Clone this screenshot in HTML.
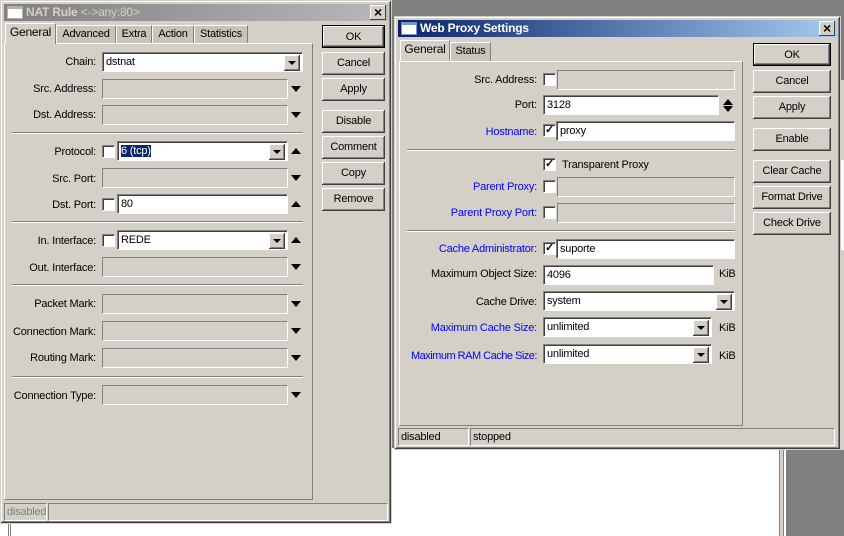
<!DOCTYPE html>
<html><head><meta charset="utf-8">
<style>
*{box-sizing:border-box;margin:0;padding:0}
body{width:844px;height:536px;overflow:hidden;position:relative;background:#808080;font-family:"Liberation Sans",sans-serif;font-size:11px;color:#000;letter-spacing:-0.2px}
.a{position:absolute}
.win{position:absolute;background:#d4d0c8;border:1px solid #d4d0c8;box-shadow:inset -1px -1px #404040,inset 1px 1px #fff,inset -2px -2px #808080}
.title{position:absolute;left:3px;right:3px;top:3px;height:17px;color:#fff;font-weight:bold;font-size:12px;line-height:17px;padding-left:22px;white-space:nowrap}
.ticon{position:absolute;left:3px;top:2px;width:16px;height:13px;background:#fff;border:1px solid #7a96c8;border-top:3px solid #7a96c8}
.close{position:absolute;right:2px;top:1px;width:16px;height:15px;background:#d4d0c8;box-shadow:inset -1px -1px #404040,inset 1px 1px #fff;color:#000;font-size:14px;line-height:14px;text-align:center;font-weight:bold;padding:0}
.tab{position:absolute;height:19px;background:#d4d0c8;border:1px solid #fff;border-right:1px solid #808080;border-bottom:none;line-height:17px;text-align:center;color:#000;font-size:11px}
.tab.sel{height:21px;background:#d4d0c8;font-size:12px;z-index:2}
.tab.un{background:#c8c4bc}
.panel{position:absolute;border:1px solid #fff;border-right-color:#808080;border-bottom-color:#808080}
.btn{position:absolute;height:23px;background:#d4d0c8;box-shadow:inset -1px -1px #404040,inset 1px 1px #fff,inset -2px -2px #808080;text-align:center;line-height:22px;font-size:11px}
.btn.def{border:1px solid #000}
.lbl{position:absolute;text-align:right;white-space:nowrap;font-size:11px}
.blue{color:#0000ff}
.fd{position:absolute;height:20px;background:#d4d0c8;border:1px solid;border-color:#808080 #fff #fff #808080}
.fw{position:absolute;height:20px;background:#fff;border:1px solid;border-color:#808080 #fff #fff #808080;box-shadow:inset 1px 1px #404040;padding:3px 0 0 3px;font-size:11px;line-height:13px;white-space:nowrap}
.cb{position:absolute;width:13px;height:13px;background:#fff;border:1px solid;border-color:#808080 #fff #fff #808080;box-shadow:inset 1px 1px #404040;font-size:11px;line-height:10px;text-align:center;font-weight:bold}
.dd{position:absolute;width:16px;height:16px;top:2px;right:2px;background:#d4d0c8;box-shadow:inset -1px -1px #404040,inset 1px 1px #fff,inset -2px -2px #808080}
.dd:after{content:"";position:absolute;left:4px;top:6px;border-left:4px solid transparent;border-right:4px solid transparent;border-top:4px solid #000}
.dn{position:absolute;width:0;height:0;border-left:5px solid transparent;border-right:5px solid transparent;border-top:6px solid #000}
.up{position:absolute;width:0;height:0;border-left:5px solid transparent;border-right:5px solid transparent;border-bottom:6px solid #000}
.sep{position:absolute;height:2px;border-top:1px solid #808080;border-bottom:1px solid #fff}
.st{position:absolute;height:18px;border:1px solid;border-color:#808080 #fff #fff #808080;padding-left:2px;line-height:16px;font-size:11px}
</style></head><body>
<div class="a" style="left:0;top:520px;width:786px;height:16px;background:#fff"></div>
<div class="a" style="left:8px;top:520px;width:3px;height:16px;border-left:1px solid #808080;border-right:1px solid #808080"></div>
<div class="a" style="left:390px;top:448px;width:396px;height:88px;background:#fff"></div>
<div class="a" style="left:779px;top:448px;width:5px;height:88px;border-left:1px solid #808080;border-right:1px solid #808080;background:#d4d0c8"></div>
<div class="a" style="left:838px;top:80px;width:6px;height:370px;background:#d4d0c8"></div>
<div class="a" style="left:838px;top:160px;width:6px;height:90px;background:#fff"></div>

<div class="win" style="left:0;top:0;width:392px;height:524px">
 <div class="title" style="background:linear-gradient(90deg,#808080,#b8b8b8);color:#d4d0c8"><div class="ticon" style="border-color:#b0b0b0"></div>NAT Rule <span style="font-weight:normal">&lt;-&gt;any:80&gt;</span><div class="close">×</div></div>
</div>
<div class="tab sel" style="left:5px;top:23px;width:51px">General</div>
<div class="tab un" style="left:56px;top:25px;width:60px">Advanced</div>
<div class="tab un" style="left:116px;top:25px;width:36px">Extra</div>
<div class="tab un" style="left:152px;top:25px;width:42px">Action</div>
<div class="tab un" style="left:194px;top:25px;width:54px">Statistics</div>
<div class="panel" style="left:4px;top:43px;width:309px;height:457px"></div>

<div class="lbl" style="left:0;width:96px;top:56px">Chain:</div>
<div class="fw" style="left:102px;top:52px;width:201px">dstnat<div class="dd"></div></div>
<div class="lbl" style="left:0;width:96px;top:83px">Src. Address:</div>
<div class="fd" style="left:102px;top:79px;width:186px"></div><div class="dn" style="left:291px;top:86px"></div>
<div class="lbl" style="left:0;width:96px;top:109px">Dst. Address:</div>
<div class="fd" style="left:102px;top:105px;width:186px"></div><div class="dn" style="left:291px;top:112px"></div>
<div class="sep" style="left:12px;top:132px;width:291px"></div>

<div class="lbl" style="left:0;width:96px;top:146px">Protocol:</div>
<div class="cb" style="left:102px;top:145px"></div>
<div class="fw" style="left:117px;top:141px;width:171px"><span style="background:#0a246a;color:#fff">6 (tcp)</span><div class="dd"></div></div><div class="up" style="left:291px;top:148px"></div>
<div class="lbl" style="left:0;width:96px;top:173px">Src. Port:</div>
<div class="fd" style="left:102px;top:168px;width:186px"></div><div class="dn" style="left:291px;top:175px"></div>
<div class="lbl" style="left:0;width:96px;top:199px">Dst. Port:</div>
<div class="cb" style="left:102px;top:198px"></div>
<div class="fw" style="left:117px;top:194px;width:171px">80</div><div class="up" style="left:291px;top:201px"></div>
<div class="sep" style="left:12px;top:221px;width:291px"></div>

<div class="lbl" style="left:0;width:96px;top:235px">In. Interface:</div>
<div class="cb" style="left:102px;top:234px"></div>
<div class="fw" style="left:117px;top:230px;width:171px">REDE<div class="dd"></div></div><div class="up" style="left:291px;top:237px"></div>
<div class="lbl" style="left:0;width:96px;top:262px">Out. Interface:</div>
<div class="fd" style="left:102px;top:257px;width:186px"></div><div class="dn" style="left:291px;top:264px"></div>
<div class="sep" style="left:12px;top:284px;width:291px"></div>

<div class="lbl" style="left:0;width:96px;top:298px">Packet Mark:</div>
<div class="fd" style="left:102px;top:294px;width:186px"></div><div class="dn" style="left:291px;top:301px"></div>
<div class="lbl" style="left:0;width:96px;top:326px">Connection Mark:</div>
<div class="fd" style="left:102px;top:321px;width:186px"></div><div class="dn" style="left:291px;top:328px"></div>
<div class="lbl" style="left:0;width:96px;top:352px">Routing Mark:</div>
<div class="fd" style="left:102px;top:348px;width:186px"></div><div class="dn" style="left:291px;top:355px"></div>
<div class="sep" style="left:12px;top:376px;width:291px"></div>
<div class="lbl" style="left:0;width:96px;top:390px">Connection Type:</div>
<div class="fd" style="left:102px;top:385px;width:186px"></div><div class="dn" style="left:291px;top:392px"></div>

<div class="btn def" style="left:322px;top:25px;width:63px">OK</div>
<div class="btn" style="left:322px;top:52px;width:63px">Cancel</div>
<div class="btn" style="left:322px;top:78px;width:63px">Apply</div>
<div class="btn" style="left:322px;top:110px;width:63px">Disable</div>
<div class="btn" style="left:322px;top:136px;width:63px">Comment</div>
<div class="btn" style="left:322px;top:162px;width:63px">Copy</div>
<div class="btn" style="left:322px;top:188px;width:63px">Remove</div>

<div class="st" style="left:4px;top:503px;width:43px;color:#808080">disabled</div>
<div class="st" style="left:48px;top:503px;width:340px"></div>

<div class="win" style="left:394px;top:16px;width:447px;height:434px">
 <div class="title" style="background:linear-gradient(90deg,#0a246a,#a6caf0)"><div class="ticon"></div>Web Proxy Settings<div class="close">×</div></div>
</div>
<div class="tab sel" style="left:400px;top:40px;width:50px">General</div>
<div class="tab un" style="left:450px;top:42px;width:41px">Status</div>
<div class="panel" style="left:399px;top:61px;width:344px;height:365px"></div>

<div class="lbl" style="left:400px;width:137px;top:74px">Src. Address:</div>
<div class="cb" style="left:543px;top:73px"></div>
<div class="fd" style="left:557px;top:70px;width:178px"></div>
<div class="lbl" style="left:400px;width:137px;top:99px">Port:</div>
<div class="fw" style="left:543px;top:95px;width:176px">3128</div>
<div class="up" style="left:723px;top:99px"></div><div class="dn" style="left:723px;top:106px"></div>
<div class="lbl blue" style="left:400px;width:137px;top:126px">Hostname:</div>
<div class="cb" style="left:543px;top:124px">✓</div>
<div class="fw" style="left:556px;top:121px;width:179px">proxy</div>
<div class="sep" style="left:407px;top:149px;width:328px"></div>

<div class="cb" style="left:543px;top:158px">✓</div>
<div class="lbl" style="left:562px;top:159px">Transparent Proxy</div>
<div class="lbl blue" style="left:400px;width:137px;top:181px">Parent Proxy:</div>
<div class="cb" style="left:543px;top:180px"></div>
<div class="fd" style="left:557px;top:177px;width:178px"></div>
<div class="lbl blue" style="left:400px;width:137px;top:207px">Parent Proxy Port:</div>
<div class="cb" style="left:543px;top:206px"></div>
<div class="fd" style="left:557px;top:203px;width:178px"></div>
<div class="sep" style="left:407px;top:230px;width:328px"></div>

<div class="lbl blue" style="left:400px;width:137px;top:243px">Cache Administrator:</div>
<div class="cb" style="left:543px;top:242px">✓</div>
<div class="fw" style="left:556px;top:239px;width:179px">suporte</div>
<div class="lbl" style="left:400px;width:137px;top:268px">Maximum Object Size:</div>
<div class="fw" style="left:543px;top:265px;width:171px">4096</div>
<div class="lbl" style="left:719px;top:268px">KiB</div>
<div class="lbl" style="left:400px;width:137px;top:296px">Cache Drive:</div>
<div class="fw" style="left:543px;top:291px;width:192px">system<div class="dd"></div></div>
<div class="lbl blue" style="left:400px;width:137px;top:322px">Maximum Cache Size:</div>
<div class="fw" style="left:543px;top:317px;width:169px">unlimited<div class="dd"></div></div>
<div class="lbl" style="left:719px;top:322px">KiB</div>
<div class="lbl blue" style="left:400px;width:137px;top:350px;letter-spacing:-0.5px">Maximum RAM Cache Size:</div>
<div class="fw" style="left:543px;top:344px;width:169px">unlimited<div class="dd"></div></div>
<div class="lbl" style="left:719px;top:350px">KiB</div>

<div class="btn def" style="left:753px;top:43px;width:78px">OK</div>
<div class="btn" style="left:753px;top:70px;width:78px">Cancel</div>
<div class="btn" style="left:753px;top:96px;width:78px">Apply</div>
<div class="btn" style="left:753px;top:128px;width:78px">Enable</div>
<div class="btn" style="left:753px;top:160px;width:78px">Clear Cache</div>
<div class="btn" style="left:753px;top:186px;width:78px">Format Drive</div>
<div class="btn" style="left:753px;top:212px;width:78px">Check Drive</div>

<div class="st" style="left:398px;top:428px;width:71px">disabled</div>
<div class="st" style="left:470px;top:428px;width:365px">stopped</div>
</body></html>
